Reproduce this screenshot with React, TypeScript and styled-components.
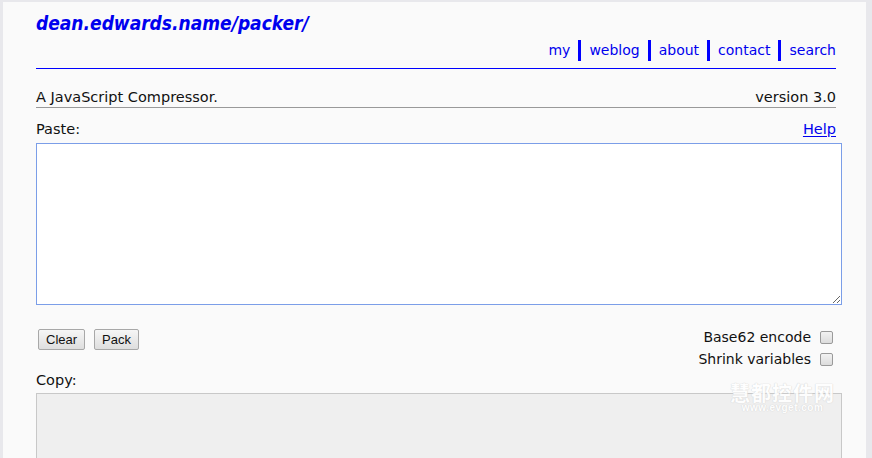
import React from "react";
import styled, { createGlobalStyle } from "styled-components";

const Global = createGlobalStyle`
  html, body { margin: 0; padding: 0; background: #e8e8ec; }
  body { font-family: "DejaVu Sans", Tahoma, sans-serif; }
`;

const Frame = styled.div`
  margin: 2px 6px 0 3px;
  background: #fafafa;
  height: 456px;
  overflow: hidden;
  position: relative;
`;

const Column = styled.div`
  width: 800px;
  margin-left: 33px;
  display: flex;
  flex-direction: column;
`;

const Header = styled.header`
  border-bottom: 1px solid #0000ff;
  padding-top: 10px;
  height: 56px;
  display: flex;
  flex-direction: column;
`;

const Title = styled.a`
  font-family: "DejaVu Sans Condensed", "DejaVu Sans", sans-serif;
  font-stretch: condensed;
  font-size: 19px;
  font-weight: bold;
  font-style: italic;
  color: #0000ee;
  text-decoration: none;
  line-height: 23px;
`;

const Nav = styled.nav`
  display: flex;
  justify-content: flex-end;
  margin-top: 5px;
`;

const NavLink = styled.a<{ $first?: boolean }>`
  font-size: 14px;
  color: #0000ee;
  text-decoration: none;
  line-height: 21px;
  padding: 0 0 0 8px;
  margin-left: 8px;
  border-left: ${(p) => (p.$first ? "none" : "3px solid #0000ff")};
  ${(p) => (p.$first ? "padding-left: 0; margin-left: 0;" : "")}
`;

const Row = styled.div<{ $border?: boolean }>`
  display: flex;
  justify-content: space-between;
  align-items: flex-end;
  font-size: 14.5px;
  color: #111;
  line-height: 18px;
  ${(p) => (p.$border ? "border-bottom: 1px solid #999; padding-bottom: 1px;" : "")}
`;

const Tagline = styled(Row)`
  margin-top: 19px;
`;

const PasteRow = styled(Row)`
  margin-top: 12px;
`;

const HelpLink = styled.a`
  color: #0000ee;
  text-decoration: underline;
  text-underline-offset: 2px;
`;

const Area = styled.textarea<{ $readonly?: boolean }>`
  display: block;
  width: 800px;
  box-sizing: content-box;
  padding: 2px;
  margin: 5px 0 0 0;
  height: 156px;
  border: 1px solid ${(p) => (p.$readonly ? "#c8c8c8" : "#7b9ee8")};
  background: ${(p) => (p.$readonly ? "#efefef" : "#ffffff")};
  outline: none;
  resize: ${(p) => (p.$readonly ? "none" : "both")};
  font-family: "Liberation Mono", monospace;
  font-size: 13px;
  caret-color: #000;
`;

const Controls = styled.div`
  display: flex;
  justify-content: space-between;
  align-items: flex-start;
  margin-top: 22px;
`;

const Buttons = styled.div`
  display: flex;
  gap: 9px;
  padding-left: 2px;
  padding-top: 2px;
`;

const Button = styled.button`
  font-family: "Liberation Sans", Arial, sans-serif;
  font-size: 13px;
  color: #111;
  height: 21px;
  padding: 0 7px;
  border: 1px solid #a8a8a8;
  border-radius: 2px;
  background: linear-gradient(#f6f6f6, #dedede);
`;

const Options = styled.div`
  display: flex;
  flex-direction: column;
  align-items: flex-end;
  gap: 3px;
  padding-top: 1px;
`;

const Option = styled.label`
  display: flex;
  align-items: center;
  gap: 9px;
  font-size: 14px;
  color: #111;
  line-height: 19px;
`;

const Check = styled.span`
  width: 11px;
  height: 11px;
  border: 1px solid #9a9a9a;
  border-radius: 2px;
  background: linear-gradient(#f2f2f2, #dcdcdc);
  margin-right: 3px;
`;

const CopyLabel = styled(Row)`
  margin-top: 2px;
`;

const CopyArea = styled(Area)`
  margin-top: 4px;
`;

const Watermark = styled.div`
  position: absolute;
  left: 727px;
  top: 381px;
  color: #ffffff;
  opacity: 0.9;
  text-align: center;
  font-family: "Noto Sans CJK SC", sans-serif;
  font-weight: bold;
  line-height: 1;
  text-shadow: 0 0 1px #d4d4d4, 0 0 1px #d4d4d4;
  pointer-events: none;
`;

const WmBig = styled.div`
  font-size: 20px;
  letter-spacing: 1px;
`;

const WmSmall = styled.div`
  font-family: "Liberation Sans", sans-serif;
  font-size: 10px;
  letter-spacing: 0.5px;
`;

export default function App() {
  return (
    <>
      <Global />
      <Frame>
        <Column>
          <Header>
            <Title href="#">dean.edwards.name/packer/</Title>
            <Nav>
              <NavLink $first href="#">my</NavLink>
              <NavLink href="#">weblog</NavLink>
              <NavLink href="#">about</NavLink>
              <NavLink href="#">contact</NavLink>
              <NavLink href="#">search</NavLink>
            </Nav>
          </Header>
          <Tagline $border>
            <span>A JavaScript Compressor.</span>
            <span>version 3.0</span>
          </Tagline>
          <PasteRow>
            <span>Paste:</span>
            <HelpLink href="#">Help</HelpLink>
          </PasteRow>
          <Area autoFocus />
          <Controls>
            <Buttons>
              <Button>Clear</Button>
              <Button>Pack</Button>
            </Buttons>
            <Options>
              <Option>Base62 encode<Check /></Option>
              <Option>Shrink variables<Check /></Option>
            </Options>
          </Controls>
          <CopyLabel>
            <span>Copy:</span>
          </CopyLabel>
          <CopyArea $readonly readOnly />
        </Column>
        <Watermark>
          <WmBig>慧都控件网</WmBig>
          <WmSmall>www.evget.com</WmSmall>
        </Watermark>
      </Frame>
    </>
  );
}
